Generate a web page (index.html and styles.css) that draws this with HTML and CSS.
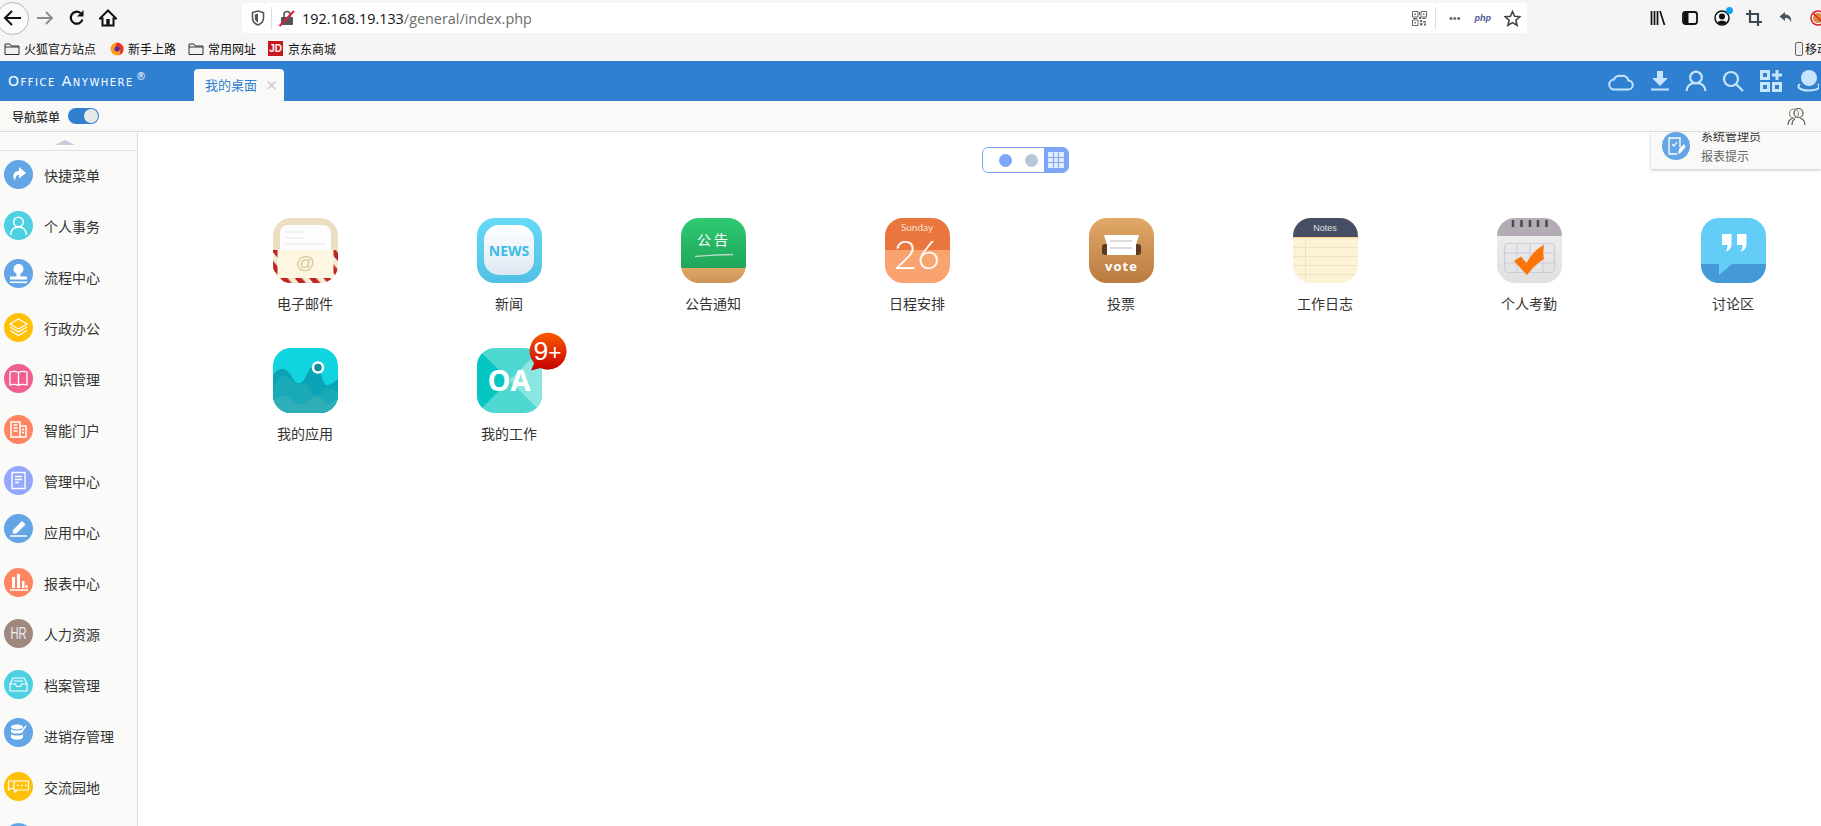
FILE: index.html
```html
<!DOCTYPE html>
<html lang="zh-CN">
<head>
    <meta charset="UTF-8">
    <title>Office Anywhere</title>
    <link rel="stylesheet" href="styles.css">
</head>
<body>
    <div class="browser-bar">
        <span class="nav-back"><svg width="22" height="22" viewBox="0 0 22 22"><path d="M19 11H4M10 4l-7 7 7 7" fill="none" stroke="#111" stroke-width="2"/></svg></span>
        <svg class="nav-forward" width="20" height="20" viewBox="0 0 20 20"><path d="M2 10h15M11 4l6 6-6 6" fill="none" stroke="#8a8a8a" stroke-width="1.8"/></svg>
        <svg class="nav-reload" width="18" height="18" viewBox="0 0 18 18"><path d="M14.5 10.5A6 6 0 1 1 12.5 4" fill="none" stroke="#111" stroke-width="2.2"/><path d="M15.500 1v6.500H9z" fill="#111"/></svg>
        <svg class="nav-home" width="18" height="18" viewBox="0 0 18 18"><path d="M9 1.500 0.800 9.500H3.500V16.500H14.500V9.500H17.200z" fill="none" stroke="#111" stroke-width="2"/><rect x="7.300" y="10" width="3.400" height="6" fill="#111"/></svg>
        <div class="url-bar">
            <svg class="shield" width="14" height="16" viewBox="0 0 14 16"><path d="M1.500 2.500 7 1l5.500 1.500V8c0 3.500-2.500 5.800-5.500 7C4 13.800 1.500 11.500 1.500 8z" fill="none" stroke="#555" stroke-width="1.600"/><path d="M7 3.500V12.500C5 11.500 3.800 10 3.800 8V4.500z" fill="#555"/></svg>
            <span class="url-line"></span>
            <svg class="lock" width="18" height="18" viewBox="0 0 18 18"><rect x="3" y="8" width="12" height="8" rx="1" fill="#555"/><path d="M6 8V5.500a3 3 0 0 1 6 0V8" fill="none" stroke="#555" stroke-width="1.600"/><path d="M1.500 17 16 2" stroke="#e0203c" stroke-width="2"/></svg>
            <span class="url-text">192.168.19.133<span class="url-path">/general/index.php</span></span>
            <svg class="qr" width="15" height="15" viewBox="0 0 15 15"><path d="M0.500 0.500h5.500v5.500h-5.500zM9 0.500h5.500v5.500h-5.500zM0.500 9h5.500v5.500h-5.500z" fill="none" stroke="#666"/><path d="M2.500 2.500h1.500v1.500h-1.500zM11 2.500h1.500v1.500h-1.500zM2.500 11h1.500v1.500h-1.500zM7 1h1v3h-1zM7 6h2v2h-2zM1 7h4v1h-4zM10 7h4v1h-4zM8 9h2v2h-2zM11 10h3v1.500h-3zM8 12h2.500v2.500h-2.500zM12 12.500h2v2h-2z" fill="#666"/></svg>
            <span class="url-line url-line-right"></span>
            <span class="url-dots">•••</span>
            <span class="url-php">php</span>
            <svg class="star" width="17" height="17" viewBox="0 0 17 17"><path d="M8.500 1.500 10.600 6.300l5.200.5-3.900 3.400 1.200 5.100-4.600-2.700-4.600 2.700 1.200-5.100L1.200 6.800l5.200-.5z" fill="none" stroke="#444" stroke-width="1.600"/></svg>
        </div>
        <div class="browser-tools">
            <svg width="16" height="16" viewBox="0 0 16 16"><path d="M1.500 1v14M4.500 1v14M7.500 1v14M10 1l4.500 14" stroke="#111" stroke-width="1.700" fill="none"/></svg>
            <svg width="16" height="16" viewBox="0 0 16 16"><rect x="1" y="2" width="14" height="12" rx="2.500" fill="none" stroke="#111" stroke-width="1.800"/><rect x="2" y="3" width="4.500" height="10" fill="#111"/></svg>
            <span class="tool-account"><svg width="16" height="16" viewBox="0 0 16 16"><circle cx="8" cy="8" r="7" fill="none" stroke="#111" stroke-width="1.500"/><circle cx="8" cy="6.500" r="3" fill="#111"/><path d="M3.500 12.500c1-2.500 8-2.500 9 0l-2 1.500h-5z" fill="#111"/></svg><i class="tool-dot"></i></span>
            <svg width="16" height="16" viewBox="0 0 16 16"><path d="M4 0v12h12M0 4h12v12" fill="none" stroke="#3c4a55" stroke-width="2.200"/></svg>
            <svg width="16" height="16" viewBox="0 0 16 16"><path d="M7 2 1.500 6.500 7 11V8c3 0 5 1 6 4.500C14 7 11 4.500 7 4.500z" fill="#4a5560"/></svg>
            <svg class="tool-block" width="16" height="16" viewBox="0 0 16 16"><circle cx="8" cy="8" r="5" fill="#e0883a"/><circle cx="8" cy="8" r="7" fill="none" stroke="#d8202c" stroke-width="1.500"/><path d="M3 3l10 10" stroke="#d8202c" stroke-width="1.500"/></svg>
        </div>
    </div>

    <div class="bookmark-bar">
        <div class="bookmark bm-first"><svg class="folder" width="16" height="14" viewBox="0 0 16 14"><path d="M1 12.500V2h5l1.500 2H15v8.500z" fill="#f2f2f2" stroke="#333"/><path d="M1 5h14" stroke="#333"/></svg>火狐官方站点</div>
        <div class="bookmark bm-second"><svg width="14" height="14" viewBox="0 0 14 14"><circle cx="7" cy="7" r="6.500" fill="#ff9a1f"/><path d="M7 .5A6.500 6.500 0 0 1 13.500 7 6.500 6.500 0 0 1 9 13.200C11 11 10.500 8 8 7 5.500 6 5 3.500 7 .5z" fill="#e3352b"/><circle cx="7" cy="7" r="2.500" fill="#5a2ca0"/></svg>新手上路</div>
        <div class="bookmark bm-third"><svg class="folder" width="16" height="14" viewBox="0 0 16 14"><path d="M1 12.500V2h5l1.500 2H15v8.500z" fill="#f2f2f2" stroke="#333"/><path d="M1 5h14" stroke="#333"/></svg>常用网址</div>
        <div class="bookmark bm-fourth"><span class="jd-logo">JD</span>京东商城</div>
        <div class="bookmark bm-mobile"><svg width="8" height="14" viewBox="0 0 8 14"><rect x=".5" y=".5" width="7" height="13" rx="1.500" fill="#eee" stroke="#666"/></svg>移动设备上的书签</div>
    </div>

    <div class="oa-header">
        <div class="oa-logo">Office Anywhere<sup>®</sup></div>
        <div class="oa-tab">我的桌面<span class="tab-close">×</span></div>
        <div class="oa-tools">
            <svg class="oa-cloud" width="26" height="20" viewBox="0 0 26 20"><path d="M6.500 18.500h13.500a4.500 4.500 0 0 0 .5-9A6 6 0 0 0 13 5 5.500 5.500 0 0 0 6 8.500a5 5 0 0 0 .5 10z" fill="none" stroke="#c6e4fb" stroke-width="2"/></svg>
            <svg class="oa-down" width="18" height="20" viewBox="0 0 18 20"><path d="M6 0h6v7h5l-8 8-8-8h5z" fill="#c6e4fb"/><path d="M0 18.500h18" stroke="#c6e4fb" stroke-width="2"/></svg>
            <svg class="oa-user" width="22" height="22" viewBox="0 0 22 22"><circle cx="11" cy="7.500" r="5.800" fill="none" stroke="#c6e4fb" stroke-width="2.200"/><path d="M1.500 21c.5-5 4-8 9.500-8s9 3 9.500 8" fill="none" stroke="#c6e4fb" stroke-width="2.200"/></svg>
            <svg class="oa-search" width="22" height="22" viewBox="0 0 22 22"><circle cx="9" cy="9" r="7" fill="none" stroke="#c6e4fb" stroke-width="2.200"/><path d="M14 14l7 7" stroke="#c6e4fb" stroke-width="2.200"/></svg>
            <svg class="oa-apps" width="22" height="22" viewBox="0 0 22 22"><path d="M1.500 1.500h7v7h-7zM1.500 13.500h7v7h-7zM13.500 13.500h7v7h-7z" fill="none" stroke="#c6e4fb" stroke-width="3"/><path d="M17 0v10M12 5h10" stroke="#c6e4fb" stroke-width="3"/></svg>
            <svg class="oa-chat" width="22" height="22" viewBox="0 0 22 22"><circle cx="12" cy="8" r="8" fill="#c6e4fb"/><path d="M3 14c-4 3 0 6.500 9 6.500s12-3 9-6.500" fill="none" stroke="#c6e4fb" stroke-width="2"/></svg>
        </div>
    </div>

    <div class="sub-bar">
        <span class="nav-label">导航菜单</span>
        <span class="nav-switch"><i></i></span>
        <svg class="sub-people" width="19" height="19" viewBox="0 0 19 19"><circle cx="11.500" cy="6" r="4.500" fill="none" stroke="#555" stroke-width="1.200"/><circle cx="7" cy="6.500" r="4.500" fill="none" stroke="#a08870" stroke-width="1.200"/><path d="M1 18c0-4 2-6 5-7M18 18c0-4-2-6-5-7M5 18c0-3 1-5 3-6" fill="none" stroke="#555" stroke-width="1.200"/></svg>
    </div>

    <div class="page">
        <div class="side-menu">
            <div class="scroll-up"><i></i></div>
            <div class="menu-item"><span class="menu-icon blue"><svg width="19" height="19" viewBox="0 0 19 19"><path d="M10 2l7 6-7 5.500V10c-2.500 0-4 1.500-3.500 5.500C3 12.500 3.500 6 10 6z" fill="#fff"/></svg></span>快捷菜单</div>
            <div class="menu-item"><span class="menu-icon cyan"><svg width="21" height="21" viewBox="0 0 21 21"><circle cx="10.500" cy="7" r="4.800" fill="none" stroke="#fff" stroke-width="1.500"/><path d="M2.500 20c.5-5 3.500-8 8-8s7.500 3 8 8" fill="none" stroke="#fff" stroke-width="1.500"/></svg></span>个人事务</div>
            <div class="menu-item"><span class="menu-icon blue up"><svg width="21" height="21" viewBox="0 0 21 21"><circle cx="10.500" cy="6" r="5" fill="#fff"/><path d="M8.500 9h4v5h-4zM2 13.500h17v3H2zM2 18.500h17v1.500H2z" fill="#fff"/></svg></span>流程中心</div>
            <div class="menu-item"><span class="menu-icon yellow"><svg width="21" height="21" viewBox="0 0 21 21"><path d="M10.500 2 19 7l-8.500 5L2 7z" fill="none" stroke="#fff" stroke-width="1.200"/><path d="M2 10l8.500 5 8.500-5M2 13.500l8.500 5 8.500-5" fill="none" stroke="#fff" stroke-width="1.200"/></svg></span>行政办公</div>
            <div class="menu-item"><span class="menu-icon pink"><svg width="21" height="21" viewBox="0 0 21 21"><path d="M10.500 4.500C8 3 5 3 2 4v13c3-1 6-1 8.500.5 2.500-1.500 5.500-1.500 8.500-.5V4c-3-1-6-1-8.500.5zM10.500 4.500v13" fill="none" stroke="#fff" stroke-width="1.300"/></svg></span>知识管理</div>
            <div class="menu-item"><span class="menu-icon coral"><svg width="19" height="19" viewBox="0 0 19 19"><path d="M2 2h9v15H2zM11 6h6v11h-6z" fill="none" stroke="#fff" stroke-width="1.500"/><path d="M4.500 5h4M4.500 8h4M4.500 11h4M13 9.500h2M13 12.500h2" stroke="#fff" stroke-width="1.500"/></svg></span>智能门户</div>
            <div class="menu-item"><span class="menu-icon violet"><svg width="19" height="19" viewBox="0 0 19 19"><rect x="3" y="1.500" width="13" height="16" fill="none" stroke="#fff" stroke-width="1.400"/><path d="M6 5.500h7M6 8.500h7M6 11.500h4" stroke="#fff" stroke-width="1.300"/></svg></span>管理中心</div>
            <div class="menu-item"><span class="menu-icon blue up"><svg width="21" height="21" viewBox="0 0 21 21"><path d="M5 12 14 3l3.500 3.500-9 9H4.500z" fill="#fff"/><path d="M2 18h17" stroke="#fff" stroke-width="1.500"/></svg></span>应用中心</div>
            <div class="menu-item"><span class="menu-icon coral"><svg width="21" height="21" viewBox="0 0 21 21"><path d="M4 5h3v11H4zM9 2h3v14H9zM14 9h2.500v7H14zM17.500 13h2v3h-2z" fill="#fff"/><path d="M2 18h18" stroke="#fff" stroke-width="1.500"/></svg></span>报表中心</div>
            <div class="menu-item"><span class="menu-icon brown"><span class="hr-mark">HR</span></span>人力资源</div>
            <div class="menu-item"><span class="menu-icon cyan"><svg width="21" height="21" viewBox="0 0 21 21"><path d="M5 4h11l3 6v7H2v-7z" fill="none" stroke="#fff" stroke-width="1.200"/><path d="M2 10h5.500l1 2.500h4l1-2.500H19M6 7h9" fill="none" stroke="#fff" stroke-width="1.200"/></svg></span>档案管理</div>
            <div class="menu-item"><span class="menu-icon blue up"><svg width="19" height="19" viewBox="0 0 19 19"><ellipse cx="8" cy="4" rx="6" ry="2.500" fill="#fff"/><path d="M2 6c2 2 10 2 12 0v3c-2 2-10 2-12 0zM2 11c2 2 10 2 12 0v3.500c-2 3-10 3-12 0z" fill="#fff"/><path d="M12 9l5-6" stroke="#fff" stroke-width="1.500"/></svg></span>进销存管理</div>
            <div class="menu-item"><span class="menu-icon yellow"><svg width="23" height="23" viewBox="0 0 23 23"><path d="M7 6H1.500v9l2-1.500H7M7 6h14.500v9H10l-2 2v-2H7z" fill="none" stroke="#fff" stroke-width="1.200"/><path d="M10 10.500h1.500M14 10.500h1.500M18 10.500h1.500" stroke="#fff" stroke-width="1.500"/></svg></span>交流园地</div>
            <div class="menu-item"><span class="menu-icon blue"></span></div>
        </div>

        <div class="desk">
            <div class="desk-switch">
                <span class="switch-dots"><i class="dot-on"></i><i class="dot-off"></i></span>
                <span class="switch-grid"><i></i><i></i><i></i><i></i><i></i><i></i><i></i><i></i><i></i></span>
            </div>

            <div class="app-grid">
                <div class="app">
                    <div class="app-icon">
                        <svg width="65" height="65" viewBox="0 0 65 65">
                            <defs><pattern id="mailStripe" width="11" height="11" patternUnits="userSpaceOnUse" patternTransform="rotate(-40)"><rect width="11" height="11" fill="#f3ebd3"/><rect width="5.500" height="11" fill="#bf2420"/></pattern></defs>
                            <rect width="65" height="65" fill="#ecdfc1"/>
                            <rect x="7" y="7" width="51" height="40" rx="8" fill="#fdfdfe"/>
                            <path d="M12 14h19M12 20h19M12 26h41" stroke="#e4e4ee" stroke-width="1.200"/>
                            <path d="M0 32h65v33H0z" fill="#fdf6e0"/>
                            <path d="M2 32V62.500H63V32" fill="none" stroke="url(#mailStripe)" stroke-width="5"/>
                            <text x="32.500" y="51" class="svg-at">@</text>
                        </svg>
                    </div>
                    <div class="app-name">电子邮件</div>
                </div>
                <div class="app">
                    <div class="app-icon">
                        <svg width="65" height="65" viewBox="0 0 65 65">
                            <defs>
                                <linearGradient id="newsBg" x1="0" y1="0" x2="0" y2="1"><stop offset="0" stop-color="#66daf6"/><stop offset="1" stop-color="#50c0e4"/></linearGradient>
                                <linearGradient id="newsIn" x1="0" y1="0" x2="0" y2="1"><stop offset="0" stop-color="#ffffff"/><stop offset="1" stop-color="#dde8f2"/></linearGradient>
                            </defs>
                            <rect width="65" height="65" fill="url(#newsBg)"/>
                            <rect x="7" y="7" width="50" height="50" rx="15" fill="url(#newsIn)"/>
                            <text x="32" y="37.500" class="svg-news">NEWS</text>
                        </svg>
                    </div>
                    <div class="app-name">新闻</div>
                </div>
                <div class="app">
                    <div class="app-icon">
                        <svg width="65" height="65" viewBox="0 0 65 65">
                            <defs>
                                <linearGradient id="boardBg" x1="0" y1="0" x2="0" y2="1"><stop offset="0" stop-color="#30c972"/><stop offset="1" stop-color="#1fa65a"/></linearGradient>
                                <linearGradient id="boardWood" x1="0" y1="0" x2="0" y2="1"><stop offset="0" stop-color="#e2a866"/><stop offset="1" stop-color="#cc9358"/></linearGradient>
                            </defs>
                            <rect width="65" height="50" fill="url(#boardBg)"/>
                            <rect y="50" width="65" height="15" fill="url(#boardWood)"/>
                            <text x="33" y="27" class="svg-board">公告</text>
                            <path d="M14 38.500c12-1 26-2 38-2" stroke="#b8dcc4" stroke-width="1.500" fill="none"/>
                        </svg>
                    </div>
                    <div class="app-name">公告通知</div>
                </div>
                <div class="app">
                    <div class="app-icon">
                        <svg width="65" height="65" viewBox="0 0 65 65">
                            <rect width="65" height="32" fill="#e9763d"/>
                            <rect y="32" width="65" height="33" fill="#f9a371"/>
                            <text x="32" y="13" class="svg-day">Sunday</text>
                            <text x="32" y="51" class="svg-date">26</text>
                        </svg>
                    </div>
                    <div class="app-name">日程安排</div>
                </div>
                <div class="app">
                    <div class="app-icon">
                        <svg width="65" height="65" viewBox="0 0 65 65">
                            <defs><linearGradient id="voteBg" x1="0" y1="0" x2="0" y2="1"><stop offset="0" stop-color="#e2a968"/><stop offset="1" stop-color="#ba7a40"/></linearGradient></defs>
                            <rect width="65" height="65" fill="url(#voteBg)"/>
                            <rect x="13" y="26" width="39" height="11" rx="3" fill="#5c3c20"/>
                            <path d="M15 17h35l-3 10v10H18V27z" fill="#fff"/>
                            <path d="M21 23h22M21 30h22" stroke="#cfcfcf" stroke-width="1.500"/>
                            <text x="32.500" y="53" class="svg-vote">vote</text>
                        </svg>
                    </div>
                    <div class="app-name">投票</div>
                </div>
                <div class="app">
                    <div class="app-icon">
                        <svg width="65" height="65" viewBox="0 0 65 65">
                            <rect width="65" height="65" fill="#fdf2d5"/>
                            <path d="M0 29.500h65M0 38.500h65M0 47.500h65M0 56.500h65M12.500 20v45" stroke="#eee1bd" stroke-width="1"/>
                            <rect width="65" height="19" fill="#474d62"/>
                            <rect y="19" width="65" height="1.500" fill="#fbd79c"/>
                            <text x="32" y="13" class="svg-notes">Notes</text>
                        </svg>
                    </div>
                    <div class="app-name">工作日志</div>
                </div>
                <div class="app">
                    <div class="app-icon">
                        <svg width="65" height="65" viewBox="0 0 65 65">
                            <defs><linearGradient id="attBg" x1="0" y1="0" x2="0" y2="1"><stop offset="0" stop-color="#f0f0f0"/><stop offset="1" stop-color="#e0e0e0"/></linearGradient></defs>
                            <rect width="65" height="65" fill="url(#attBg)"/>
                            <rect width="65" height="18" fill="#b4acb5"/>
                            <path d="M16 2v7M24.500 2v7M33 2v7M41 2v7M49.500 2v7" stroke="#4d4650" stroke-width="2.500"/>
                            <rect x="7.500" y="25.500" width="50" height="29" rx="4" fill="none" stroke="#cfcbd8" stroke-width="1.200"/>
                            <path d="M20 26v28M33 26v28M46 26v28M8 35h49M8 45h49" stroke="#cfcbd8" stroke-width="1"/>
                            <path d="M17 43l7-4.500 5.500 6.500C34 37 39 31 47 27c-1 6-1 10 0 14-5 3-11 8-17 16z" fill="#fb7405"/>
                        </svg>
                    </div>
                    <div class="app-name">个人考勤</div>
                </div>
                <div class="app">
                    <div class="app-icon">
                        <svg width="65" height="65" viewBox="0 0 65 65">
                            <rect width="65" height="46" fill="#64cdf7"/>
                            <rect y="46" width="65" height="19" fill="#449ad8"/>
                            <path d="M18 46v11l13-11z" fill="#64cdf7"/>
                            <path d="M21 16h9.500v10c0 4-2 6-6 8 1.500-2 2-4 2-7H21zM36 16h9.500v10c0 4-2 6-6 8 1.500-2 2-4 2-7H36z" fill="#fff"/>
                        </svg>
                    </div>
                    <div class="app-name">讨论区</div>
                </div>
                <div class="app">
                    <div class="app-icon">
                        <svg width="65" height="65" viewBox="0 0 65 65">
                            <rect width="65" height="65" fill="#10d4e0"/>
                            <path d="M0 27c7-9 13-8 19 2 4 8 9 8 13 1 4-8 7-15 12-13 4 3 4 15 9 20 4 1 8-3 12-6v34H0z" fill="#0aa4b6"/>
                            <path d="M0 44c2-9 8-22 15-14 6 8 14 4 20 8 5 7 6 13 12 8 6-6 12-7 18-1v20H0z" fill="#1aa9b6"/>
                            <path d="M0 53c8-8 14-6 20 0 6 6 13 4 19-3 7-4 11 2 15 5 4 1 8-2 11-4v14H0z" fill="#30aeb8"/>
                            <circle cx="45" cy="19.500" r="5" fill="#0c8e9c" stroke="#fff" stroke-width="2.500"/>
                        </svg>
                    </div>
                    <div class="app-name">我的应用</div>
                </div>
                <div class="app">
                    <div class="app-icon">
                        <svg width="65" height="65" viewBox="0 0 65 65">
                            <rect width="65" height="65" fill="#4fd8d1"/>
                            <path d="M0 0 32.500 32.500 0 65z" fill="#05c6c0"/>
                            <path d="M65 0 32.500 32.500 65 65z" fill="#8ae6e1"/>
                            <text x="32" y="43" class="svg-oa">OA</text>
                        </svg>
                    </div>
                    <div class="app-name">我的工作</div>
                    <div class="app-badge">
                        <svg width="39" height="39" viewBox="0 0 38 38">
                            <defs><linearGradient id="badgeBg" x1="0" y1="0" x2="0" y2="1"><stop offset="0" stop-color="#fb5a00"/><stop offset="1" stop-color="#c40000"/></linearGradient></defs>
                            <path d="M3 37.500l3-7A18 18 0 1 1 12 35z" fill="url(#badgeBg)"/>
                            <text x="19" y="27" class="svg-badge">9<tspan class="svg-plus">+</tspan></text>
                        </svg>
                    </div>
                </div>
            </div>

            <div class="notice-pop">
                <span class="notice-icon"><svg width="20" height="20" viewBox="0 0 20 20"><path d="M14 11V2H3v16h8" fill="none" stroke="#fff" stroke-width="1.300"/><path d="M6 8l2 2 3-4" fill="none" stroke="#fff" stroke-width="1.200"/><path d="M12 18l1-5 5-5 1.500 3-5 6z" fill="#fff"/></svg></span>
                <div class="notice-text">
                    <div class="notice-title">系统管理员</div>
                    <div class="notice-sub">报表提示</div>
                </div>
            </div>
        </div>
    </div>
</body>
</html>
```

FILE: styles.css
```css
* {
    margin: 0;
    padding: 0;
    box-sizing: border-box;
}
html, body {
    height: 100%;
    overflow: hidden;
}
body {
    display: flex;
    flex-direction: column;
    background-color: #fff;
    color: #333;
    font-family: "Noto Sans CJK SC", "Noto Sans", sans-serif;
    font-size: 14px;
}
i {
    display: block;
}

/* browser chrome */
.browser-bar {
    height: 36px;
    display: flex;
    align-items: center;
    background-color: #f5f5f5;
    flex-shrink: 0;
    overflow: hidden;
}
.browser-bar svg {
    flex-shrink: 0;
}
.nav-back {
    width: 33px;
    height: 33px;
    margin-left: -4px;
    border: 1px solid #b8b8b8;
    border-radius: 50%;
    background-color: #fafafa;
    display: flex;
    align-items: center;
    justify-content: center;
    flex-shrink: 0;
}
.nav-forward {
    margin-left: 6px;
}
.nav-reload {
    margin-left: 13px;
}
.nav-home {
    margin-left: 13px;
}
.url-bar {
    width: 1285px;
    height: 30px;
    margin-left: 125px;
    padding-left: 9px;
    display: flex;
    align-items: center;
    background-color: #fff;
    border-radius: 3px;
    flex-shrink: 0;
}
.url-line {
    width: 1px;
    height: 22px;
    margin-left: 6px;
    background-color: #ddd;
    flex-shrink: 0;
}
.lock {
    margin-left: 6px;
}
.url-text {
    margin-left: 6px;
    width: 1099px;
    flex-shrink: 0;
    font-family: "Open Sans", sans-serif;
    font-size: 14.4px;
    color: #111;
    white-space: nowrap;
}
.url-path {
    color: #6d6d6d;
}
.qr {
    margin-left: 11px;
}
.url-line-right {
    margin-left: 8px;
}
.url-dots {
    margin-left: 13px;
    font-size: 11px;
    color: #666;
    font-family: "Liberation Sans", sans-serif;
}
.url-php {
    margin-left: 14px;
    font-family: "Liberation Sans", sans-serif;
    font-size: 9px;
    font-style: italic;
    font-weight: bold;
    color: #4f5b93;
}
.star {
    margin-left: 13px;
}
.browser-tools {
    margin-left: 123px;
    display: flex;
    align-items: center;
    gap: 16px;
    flex-shrink: 0;
}
.tool-account {
    position: relative;
    display: flex;
}
.tool-dot {
    position: absolute;
    top: -3px;
    right: -3px;
    width: 7px;
    height: 7px;
    border-radius: 50%;
    background-color: #0aa5ee;
}
.bookmark-bar {
    height: 25px;
    display: flex;
    align-items: center;
    background-color: #f5f5f5;
    color: #111;
    font-size: 12px;
    flex-shrink: 0;
    white-space: nowrap;
}
.bookmark {
    display: flex;
    align-items: center;
    gap: 4px;
}
.bm-first {
    margin-left: 4px;
}
.bm-second {
    margin-left: 14px;
}
.bm-third {
    margin-left: 12px;
}
.bm-fourth {
    margin-left: 12px;
    gap: 5px;
}
.jd-logo {
    width: 15px;
    height: 15px;
    background-color: #c8161d;
    color: #fff;
    font-family: "Liberation Sans", sans-serif;
    font-size: 10px;
    font-weight: bold;
    line-height: 15px;
    text-align: center;
}
.bm-mobile {
    margin-left: 1459px;
    gap: 2px;
}

/* oa header */
.oa-header {
    height: 40px;
    display: flex;
    background-color: #3080d2;
    flex-shrink: 0;
    position: relative;
}
.oa-logo {
    width: 194px;
    padding-left: 8px;
    color: #fff;
    font-family: "DejaVu Sans", sans-serif;
    font-variant: small-caps;
    font-size: 14px;
    letter-spacing: 1.5px;
    line-height: 40px;
    white-space: nowrap;
}
.oa-logo sup {
    font-size: 10px;
    line-height: 0;
    margin-left: 2px;
}
.oa-tab {
    width: 90px;
    height: 32px;
    margin-top: 8px;
    padding-left: 11px;
    background-color: #f9f9f7;
    border-radius: 4px 4px 0 0;
    color: #3080d2;
    font-size: 13px;
    line-height: 32px;
    position: relative;
}
.tab-close {
    margin-left: 8px;
    color: #ccc;
    font-size: 13px;
    font-weight: bold;
}
.oa-tools {
    margin-left: auto;
    display: flex;
    align-items: center;
    overflow: hidden;
    width: 213px;
    white-space: nowrap;
}
.oa-tools svg {
    flex-shrink: 0;
}
.oa-down {
    margin-left: 17px;
}
.oa-user {
    margin-left: 16px;
}
.oa-search {
    margin-left: 15px;
}
.oa-apps {
    margin-left: 16px;
}
.oa-chat {
    margin-left: 15px;
}
.sub-bar {
    height: 31px;
    padding-left: 12px;
    display: flex;
    align-items: center;
    background-color: #f9f9f7;
    border-bottom: 1px solid #dcdcdc;
    flex-shrink: 0;
}
.nav-label {
    font-size: 12px;
    font-weight: 500;
    color: #333;
}
.nav-switch {
    width: 31px;
    height: 16px;
    margin-left: 8px;
    padding: 1px;
    display: flex;
    justify-content: flex-end;
    background-color: #3080d2;
    border-radius: 8px;
}
.nav-switch i {
    width: 14px;
    height: 14px;
    border-radius: 50%;
    background-color: #e8e8e8;
}
.sub-people {
    margin-left: auto;
    margin-right: 15px;
}

/* left menu */
.page {
    flex: 1;
    display: flex;
    min-height: 0;
}
.side-menu {
    width: 138px;
    flex-shrink: 0;
    background-color: #fafaf8;
    border-right: 1px solid #dcdcdc;
    overflow: hidden;
}
.scroll-up {
    height: 19px;
    margin-bottom: -2px;
    border-bottom: 1px solid #e2e2e2;
    padding-top: 8px;
}
.scroll-up i {
    width: 0;
    margin-left: 55px;
    border-left: 10px solid transparent;
    border-right: 10px solid transparent;
    border-bottom: 5px solid #c3cfdb;
}
.menu-item {
    height: 51px;
    display: flex;
    align-items: center;
    white-space: nowrap;
    color: #333;
    font-size: 14px;
}
.menu-icon {
    width: 29px;
    height: 29px;
    margin: 0 11px 0 4px;
    border-radius: 50%;
    display: flex;
    align-items: center;
    justify-content: center;
    flex-shrink: 0;
}
.menu-icon.up {
    margin-bottom: 6px;
}
.blue {
    background-color: #64a5e6;
}
.cyan {
    background-color: #4dd0e1;
}
.yellow {
    background-color: #ffc107;
}
.pink {
    background-color: #f0608f;
}
.coral {
    background-color: #ff8462;
}
.violet {
    background-color: #93a8fd;
}
.brown {
    background-color: #a1887f;
}
.hr-mark {
    color: #e6eef5;
    font-family: "Liberation Sans", sans-serif;
    font-size: 16px;
    transform: scaleX(0.7);
}

/* desktop */
.desk {
    flex: 1;
    position: relative;
    overflow: hidden;
    background-color: #fff;
}
.desk-switch {
    width: 87px;
    height: 26px;
    margin: 15px 0 0 844px;
    display: flex;
    border: 1px solid #7ea6f7;
    border-radius: 6px;
    overflow: hidden;
}
.switch-dots {
    flex: 1;
    display: flex;
    align-items: center;
    gap: 13px;
    padding-left: 16px;
}
.switch-dots i {
    width: 13px;
    height: 13px;
    border-radius: 50%;
}
.dot-on {
    background-color: #7ea6f7;
}
.dot-off {
    background-color: #b8c6da;
}
.switch-grid {
    width: 24px;
    padding: 4px 4px;
    display: grid;
    grid-template-columns: repeat(3, 1fr);
    gap: 1px;
    background-color: #7ea6f7;
}
.switch-grid i {
    background-color: #e4ecfb;
}
.app-grid {
    width: 1632px;
    margin: 45px 0 0 65px;
    display: grid;
    grid-template-columns: repeat(8, 204px);
    grid-auto-rows: 130px;
}
.app {
    position: relative;
    display: flex;
    flex-direction: column;
    align-items: center;
}
.app-icon {
    width: 65px;
    height: 65px;
    border-radius: 18px;
    overflow: hidden;
}
.app-icon svg {
    display: block;
}
.app-name {
    margin-top: 10px;
    font-size: 14px;
    line-height: 20px;
    color: #333;
}
.app-badge {
    position: absolute;
    top: -16px;
    left: 121px;
}
.app-badge svg {
    display: block;
}

/* svg text inside the app icons */
.app-icon text, .app-badge text {
    text-anchor: middle;
}
.svg-at {
    font-family: "Liberation Sans", sans-serif;
    font-size: 19px;
    fill: #d8c9a0;
}
.svg-news {
    font-family: "Open Sans", sans-serif;
    font-size: 14px;
    font-weight: bold;
    fill: #3cbde6;
}
.svg-board {
    font-size: 14px;
    letter-spacing: 3px;
    fill: #fff;
}
.svg-day {
    font-family: "Lato", sans-serif;
    font-size: 10px;
    fill: #fbe0cf;
}
.svg-date {
    font-family: "Lato", sans-serif;
    font-size: 40px;
    font-weight: 300;
    fill: #fff;
}
.svg-vote {
    font-family: "Open Sans", sans-serif;
    font-size: 13px;
    font-weight: bold;
    letter-spacing: 1px;
    fill: #fff;
}
.svg-notes {
    font-family: "Liberation Sans", sans-serif;
    font-size: 9px;
    fill: #e0e0e0;
}
.svg-oa {
    font-family: "Open Sans", sans-serif;
    font-size: 29px;
    font-weight: bold;
    fill: #fff;
}
.svg-badge {
    font-family: "Liberation Sans", sans-serif;
    font-size: 26px;
    fill: #fff;
}
.svg-plus {
    font-size: 22px;
}

/* notice popup, sits over the desk */
.notice-pop {
    position: absolute;
    top: 0;
    right: 0;
    width: 170px;
    height: 37px;
    padding-left: 11px;
    display: flex;
    background-color: #f9f9f7;
    box-shadow: 0 1px 3px rgba(0, 0, 0, 0.25);
    overflow: hidden;
}
.notice-icon {
    width: 28px;
    height: 28px;
    border-radius: 50%;
    background-color: #64a5e6;
    display: flex;
    align-items: center;
    justify-content: center;
}
.notice-text {
    margin-left: 11px;
    margin-top: -6px;
    font-size: 12px;
    line-height: 20px;
}
.notice-title {
    color: #333;
}
.notice-sub {
    color: #666;
}
```
